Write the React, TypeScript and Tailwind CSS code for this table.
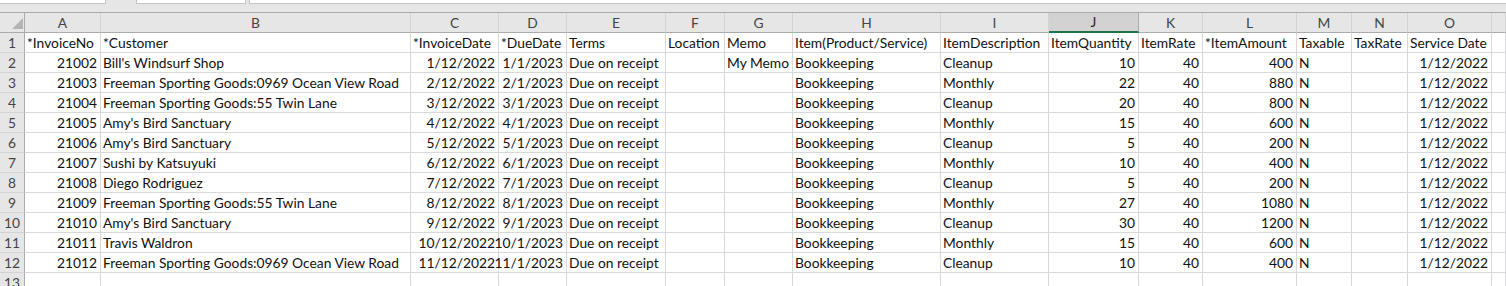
import React from "react";

const cols = ["A","B","C","D","E","F","G","H","I","J","K","L","M","N","O",""];
type Cell = { v: string; r?: boolean };

const headers = ["*InvoiceNo","*Customer","*InvoiceDate","*DueDate","Terms","Location","Memo","Item(Product/Service)","ItemDescription","ItemQuantity","ItemRate","*ItemAmount","Taxable","TaxRate","Service Date",""];

const data: [string,string,string,string,string,string,string,string][] = [
  ["21002","Bill's Windsurf Shop","1/12/2022","1/1/2023","My Memo","Cleanup","10","400"],
  ["21003","Freeman Sporting Goods:0969 Ocean View Road","2/12/2022","2/1/2023","","Monthly","22","880"],
  ["21004","Freeman Sporting Goods:55 Twin Lane","3/12/2022","3/1/2023","","Cleanup","20","800"],
  ["21005","Amy's Bird Sanctuary","4/12/2022","4/1/2023","","Monthly","15","600"],
  ["21006","Amy's Bird Sanctuary","5/12/2022","5/1/2023","","Cleanup","5","200"],
  ["21007","Sushi by Katsuyuki","6/12/2022","6/1/2023","","Monthly","10","400"],
  ["21008","Diego Rodriguez","7/12/2022","7/1/2023","","Cleanup","5","200"],
  ["21009","Freeman Sporting Goods:55 Twin Lane","8/12/2022","8/1/2023","","Monthly","27","1080"],
  ["21010","Amy's Bird Sanctuary","9/12/2022","9/1/2023","","Cleanup","30","1200"],
  ["21011","Travis Waldron","10/12/2022","10/1/2023","","Monthly","15","600"],
  ["21012","Freeman Sporting Goods:0969 Ocean View Road","11/12/2022","11/1/2023","","Cleanup","10","400"],
];

const rows: Cell[][] = data.map((d) => [
  { v: d[0], r: true },
  { v: d[1] },
  { v: d[2], r: true },
  { v: d[3], r: true },
  { v: "Due on receipt" },
  { v: "" },
  { v: d[4] },
  { v: "Bookkeeping" },
  { v: d[5] },
  { v: d[6], r: true },
  { v: "40", r: true },
  { v: d[7], r: true },
  { v: "N" },
  { v: "" },
  { v: "1/12/2022", r: true },
  { v: "" },
]);

const grid =
  "grid grid-cols-[25px_76px_310px_88px_68px_99px_59px_68px_148px_108px_90px_64px_94px_55px_56px_84px_14px]";

function RowHead({ n }: { n: number | string }) {
  return (
    <div className="h-[20px] bg-[#e6e6e6] border-r border-b border-r-[#ababab] border-b-[#d4d4d4] flex items-center justify-center text-[#444] leading-none">
      {n}
    </div>
  );
}

function DataCell({ c }: { c: Cell }) {
  return (
    <div
      className={
        "h-[20px] border-r border-b border-[#d9d9dc] bg-white flex items-center whitespace-nowrap overflow-visible leading-none text-[#111] " +
        (c.r ? "justify-end pr-[3px]" : "justify-start pl-[2px]")
      }
    >
      {c.v}
    </div>
  );
}

export default function App() {
  return (
    <div
      className="w-[1506px] h-[286px] overflow-hidden bg-[#e6e6e6] text-[13.8px]"
      style={{ fontFamily: "Lato, 'Liberation Sans', sans-serif" }}
    >
      {/* top strip */}
      <div className="h-[12px] flex items-start">
        <div className="w-[106px] h-[4px] bg-white border-r border-b border-[#c6c6c6]" />
        <div className="w-[30px]" />
        <div className="w-[110px] h-[4px] bg-white border-l border-r border-b border-[#c6c6c6]" />
        <div className="w-[3px]" />
        <div className="flex-1 h-[4px] bg-white border-l border-b border-[#c6c6c6]" />
      </div>
      {/* column header row */}
      <div className={grid + " border-t border-[#ababab]"}>
        <div className="h-[20px] bg-[#e6e6e6] border-r border-b border-[#ababab] relative">
          <svg className="absolute left-[12px] top-[5px]" width="11" height="11" viewBox="0 0 11 11">
            <polygon points="0,11 11,11 11,0" fill="#b4b4b4" />
          </svg>
        </div>
        {cols.map((c, i) =>
          c === "J" ? (
            <div
              key={i}
              className="h-[20px] bg-[#d2d2d2] border-r border-[#ababab] border-b-2 border-b-[#217346] flex items-center justify-center text-[#262626] leading-none"
            >
              {c}
            </div>
          ) : (
            <div
              key={i}
              className="h-[20px] bg-[#e6e6e6] border-r border-b border-r-[#d4d4d4] border-b-[#ababab] flex items-center justify-center text-[#444] leading-none"
            >
              {c}
            </div>
          )
        )}
      </div>
      {/* header data row */}
      <div className={grid}>
        <RowHead n={1} />
        {headers.map((h, i) => (
          <DataCell key={i} c={{ v: h }} />
        ))}
      </div>
      {rows.map((r, ri) => (
        <div key={ri} className={grid}>
          <RowHead n={ri + 2} />
          {r.map((c, ci) => (
            <DataCell key={ci} c={c} />
          ))}
        </div>
      ))}
      <div className={grid}>
        <RowHead n={13} />
        {cols.map((_, i) => (
          <DataCell key={i} c={{ v: "" }} />
        ))}
      </div>
    </div>
  );
}
